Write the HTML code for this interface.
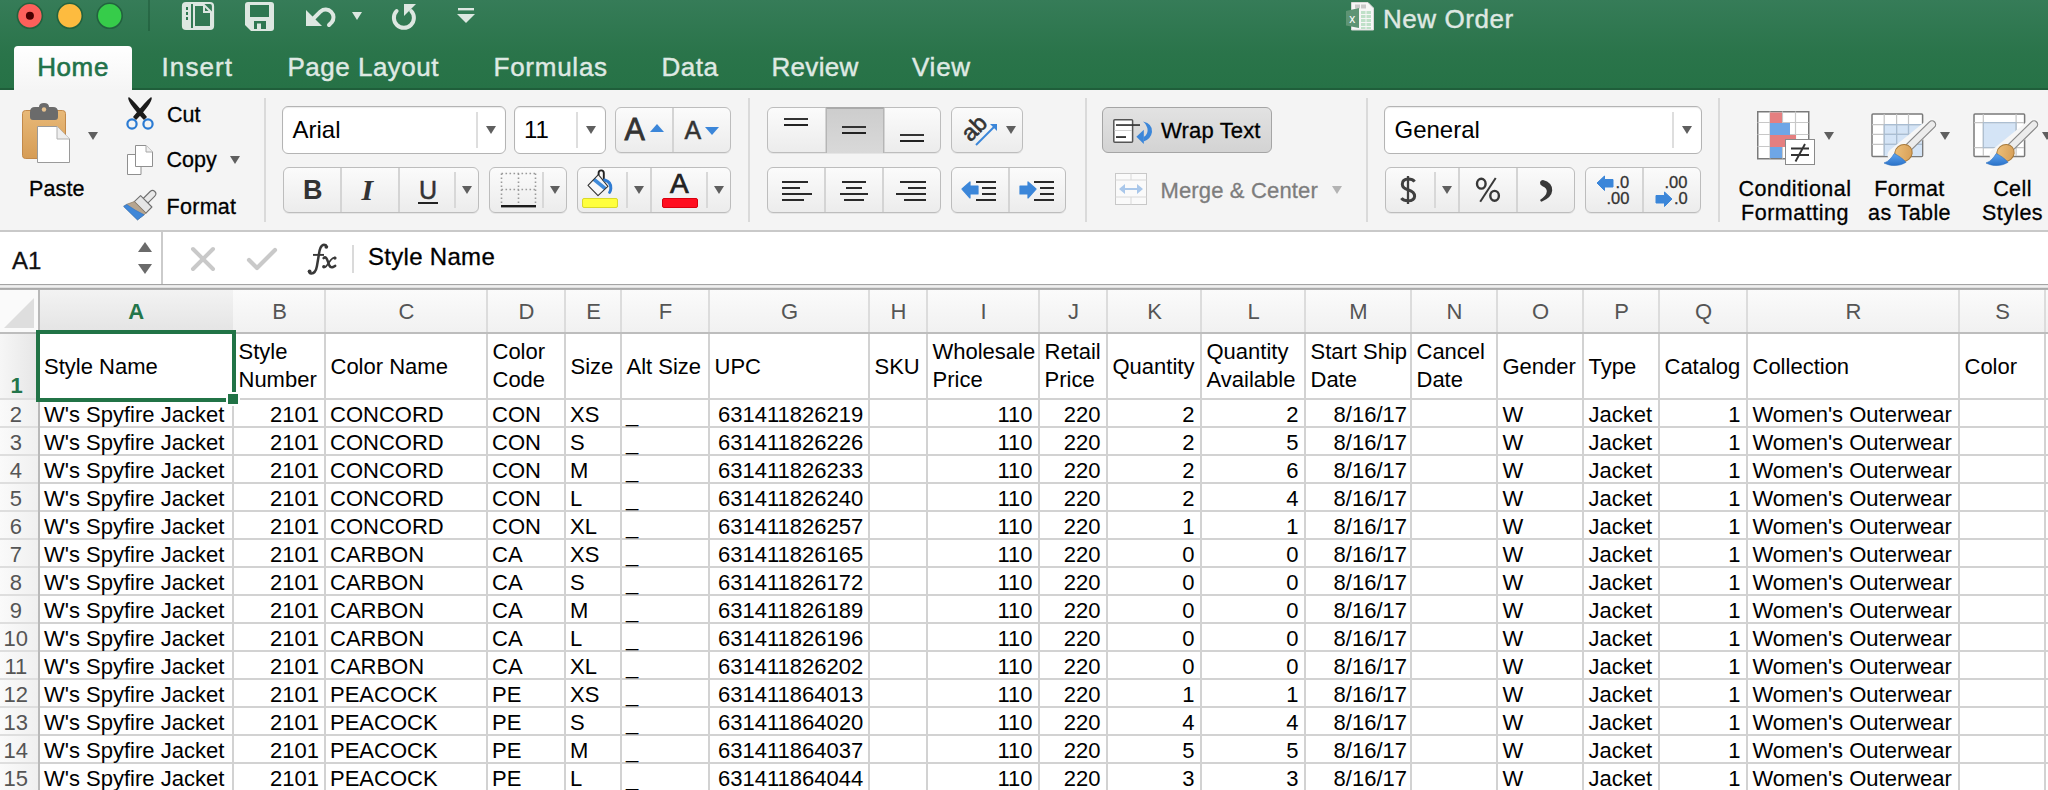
<!DOCTYPE html>
<html><head><meta charset="utf-8"><title>New Order</title>
<style>
html,body{margin:0;padding:0;}
body{width:2048px;height:790px;overflow:hidden;position:relative;background:#fff;font-family:"Liberation Sans", sans-serif;}
.t{position:absolute;white-space:pre;}
svg{overflow:visible;}
</style></head><body>
<div style="position:absolute;left:0px;top:0px;width:2048px;height:89px;background:linear-gradient(#367c58,#2a744a 60%,#267246);"></div>
<div style="position:absolute;left:0px;top:88px;width:2048px;height:2px;background:#1f5e3a;"></div>
<svg style="position:absolute;left:0px;top:0px" width="140" height="32" viewBox="0 0 140 32"><g stroke="#22623f" stroke-width="1.6"><circle cx="29.9" cy="15.8" r="12.5" fill="#fd605b"/><circle cx="69.8" cy="15.8" r="12.5" fill="#fdbb3f"/><circle cx="109.7" cy="15.8" r="12.5" fill="#36cc4a"/></g><circle cx="29.9" cy="15.8" r="4" fill="#4a0002"/></svg>
<div style="position:absolute;left:148px;top:0px;width:2px;height:31px;background:rgba(0,40,20,.22);"></div>
<svg style="position:absolute;left:182px;top:2px" width="32" height="28" viewBox="0 0 32 28"><rect x="1" y="1" width="30" height="26" rx="3" fill="none" stroke="#dde7e1" stroke-width="2.2"/><rect x="1" y="1" width="8" height="26" fill="#dde7e1"/><rect x="4" y="5" width="2" height="3" fill="#2f7751"/><rect x="4" y="10" width="2" height="3" fill="#2f7751"/><rect x="4" y="15" width="2" height="3" fill="#2f7751"/><path d="M12 3 H22 L29 10 V25 H12 Z" fill="none" stroke="#dde7e1" stroke-width="2"/><path d="M22 3 V10 H29" fill="none" stroke="#dde7e1" stroke-width="2"/></svg>
<svg style="position:absolute;left:245px;top:2px" width="30" height="29" viewBox="0 0 30 29"><path d="M3 0 H26 Q29 0 29 3 V26 Q29 29 26 29 H6 L0 23 V3 Q0 0 3 0 Z" fill="#dde7e1"/><rect x="5" y="3" width="19" height="12" fill="#2f7751"/><rect x="9" y="19" width="12" height="8" fill="#2f7751"/><rect x="12" y="21.5" width="4" height="5.5" fill="#dde7e1"/></svg>
<svg style="position:absolute;left:296px;top:0px" width="40" height="32" viewBox="0 0 40 32"><path d="M10 10 V26 H26 Z" fill="#dde7e1"/><path d="M16.5 19.5 L24.6 11.4 A7.8 7.8 0 0 1 35.6 22.4 L33 25" fill="none" stroke="#dde7e1" stroke-width="4" stroke-linecap="round" stroke-linejoin="round"/></svg>
<svg style="position:absolute;left:352px;top:12px" width="10" height="9" viewBox="0 0 10 9"><path d="M0 0 H10 L5 8 Z" fill="#dde7e1"/></svg>
<svg style="position:absolute;left:380px;top:0px" width="40" height="32" viewBox="0 0 40 32"><path d="M16.6 11 A10 10 0 1 0 31.2 11" fill="none" stroke="#dde7e1" stroke-width="4" stroke-linecap="round"/><path d="M24 4 H36 L24 16 Z" fill="#dde7e1"/></svg>
<svg style="position:absolute;left:457px;top:7px" width="18" height="17" viewBox="0 0 18 17"><rect x="1" y="1" width="16" height="2.4" fill="#dde7e1"/><path d="M0 7 H18 L9 16 Z" fill="#dde7e1"/></svg>
<svg style="position:absolute;left:1346px;top:2px" width="28" height="28" viewBox="0 0 28 28"><path d="M5.5 0.5 H22 L27.5 6 V28 H5.5 Z" fill="#f6f6f6" stroke="#d8d8d8" stroke-width="1"/><g fill="#c9c9c9"><rect x="9" y="2.5" width="5" height="4"/><rect x="15" y="2.5" width="5" height="4"/></g><g fill="#bfe0c8"><rect x="15" y="9" width="4.5" height="3"/><rect x="20.5" y="9" width="4.5" height="3"/><rect x="15" y="13" width="4.5" height="3"/><rect x="20.5" y="13" width="4.5" height="3"/><rect x="15" y="17" width="4.5" height="3"/><rect x="20.5" y="17" width="4.5" height="3"/><rect x="15" y="21" width="4.5" height="3"/><rect x="20.5" y="21" width="4.5" height="3"/><rect x="15" y="25" width="4.5" height="2"/><rect x="20.5" y="25" width="4.5" height="2"/></g><path d="M0 9 L13 6 V26 L0 23.5 Z" fill="#5e9474"/><text x="6.3" y="20.5" font-size="12" fill="#fff" text-anchor="middle" font-family="Liberation Sans">x</text></svg>
<div class="t" style="left:1383px;top:6.29px;font-size:26px;line-height:26px;color:#dfe8e2;font-weight:normal;letter-spacing:0.55px;-webkit-text-stroke:0.45px #dfe8e2;">New Order</div>
<div style="position:absolute;left:14px;top:46px;width:118px;height:44px;background:linear-gradient(#ffffff,#f5f5f5);border-radius:4px 4px 0 0;"></div>
<div class="t" style="left:37.2px;top:54.29px;font-size:26px;line-height:26px;color:#22724a;font-weight:normal;letter-spacing:0.6px;-webkit-text-stroke:0.6px #22724a;">Home</div>
<div class="t" style="left:161.5px;top:54.49px;font-size:26px;line-height:26px;color:#dfe9e3;font-weight:normal;letter-spacing:1.1px;-webkit-text-stroke:0.45px #dfe9e3;">Insert</div>
<div class="t" style="left:287.5px;top:54.49px;font-size:26px;line-height:26px;color:#dfe9e3;font-weight:normal;letter-spacing:0.5px;-webkit-text-stroke:0.45px #dfe9e3;">Page Layout</div>
<div class="t" style="left:493.5px;top:54.49px;font-size:26px;line-height:26px;color:#dfe9e3;font-weight:normal;letter-spacing:0.75px;-webkit-text-stroke:0.45px #dfe9e3;">Formulas</div>
<div class="t" style="left:661.5px;top:54.49px;font-size:26px;line-height:26px;color:#dfe9e3;font-weight:normal;letter-spacing:0.5px;-webkit-text-stroke:0.45px #dfe9e3;">Data</div>
<div class="t" style="left:771.5px;top:54.49px;font-size:26px;line-height:26px;color:#dfe9e3;font-weight:normal;letter-spacing:0.3px;-webkit-text-stroke:0.45px #dfe9e3;">Review</div>
<div class="t" style="left:912px;top:54.49px;font-size:26px;line-height:26px;color:#dfe9e3;font-weight:normal;letter-spacing:0.75px;-webkit-text-stroke:0.45px #dfe9e3;">View</div>
<div style="position:absolute;left:0px;top:90px;width:2048px;height:140px;background:#f4f4f4;"></div>
<div style="position:absolute;left:0px;top:230px;width:2048px;height:2px;background:#c9c9c9;"></div>
<svg style="position:absolute;left:20px;top:102px" width="52" height="62" viewBox="0 0 52 62"><defs><linearGradient id="cb" x1="0" y1="0" x2="0" y2="1"><stop offset="0" stop-color="#e8b978"/><stop offset="1" stop-color="#d69c55"/></linearGradient></defs><rect x="2.5" y="8.5" width="43" height="48" rx="3" fill="url(#cb)" stroke="#c2894a" stroke-width="1"/><path d="M10 10 Q10 5 15 5 H19 Q19 1 24 1 Q29 1 29 5 H33 Q38 5 38 10 V15 Q38 18 35 18 H13 Q10 18 10 15 Z" fill="#6b6b6b"/><circle cx="24" cy="7.5" r="2.2" fill="#e8c390"/><path d="M17.5 24.5 H37 L49.5 37 V60.5 H17.5 Z" fill="#fff" stroke="#9a9a9a" stroke-width="1"/><path d="M37 24.5 V37 H49.5" fill="#eeeeee" stroke="#b0b0b0" stroke-width="1"/></svg>
<svg style="position:absolute;left:88px;top:132px" width="10" height="8" viewBox="0 0 10 8"><path d="M0 0 H10 L5.0 8 Z" fill="#5f5f5f"/></svg>
<div class="t" style="left:29px;top:178.80px;font-size:21.5px;line-height:21.5px;color:#000;font-weight:normal;letter-spacing:0.15px;-webkit-text-stroke:0.3px #000;">Paste</div>
<svg style="position:absolute;left:124px;top:97px" width="32" height="34" viewBox="0 0 32 34"><path d="M5 1 Q5 6 20 22 L22 20 Q10 5 5 1 Z" fill="#1b1b1b" stroke="#1b1b1b" stroke-width="1.6" stroke-linejoin="round"/><path d="M27 1 Q27 6 12 22 L10 20 Q22 5 27 1 Z" fill="#1b1b1b" stroke="#1b1b1b" stroke-width="1.6" stroke-linejoin="round"/><circle cx="8" cy="27" r="4.6" fill="none" stroke="#2b7bd3" stroke-width="2.2"/><circle cx="24" cy="27" r="4.6" fill="none" stroke="#2b7bd3" stroke-width="2.2"/></svg>
<div class="t" style="left:167px;top:104.80px;font-size:21.5px;line-height:21.5px;color:#000;font-weight:normal;-webkit-text-stroke:0.3px #000;">Cut</div>
<svg style="position:absolute;left:126px;top:144px" width="28" height="32" viewBox="0 0 28 32"><path d="M1.5 10.5 H15 V30.5 H1.5 Z" fill="#fff" stroke="#8f8f8f" stroke-width="1"/><path d="M9.5 1.5 H20 L26.5 8 V22.5 H9.5 Z" fill="#fff" stroke="#8f8f8f" stroke-width="1"/><path d="M20 1.5 V8 H26.5" fill="#eee" stroke="#a8a8a8" stroke-width="1"/></svg>
<div class="t" style="left:166.5px;top:149.80px;font-size:21.5px;line-height:21.5px;color:#000;font-weight:normal;-webkit-text-stroke:0.3px #000;">Copy</div>
<svg style="position:absolute;left:230px;top:156px" width="10" height="8" viewBox="0 0 10 8"><path d="M0 0 H10 L5.0 8 Z" fill="#5f5f5f"/></svg>
<svg style="position:absolute;left:118px;top:186px" width="44" height="38" viewBox="0 0 44 38"><path d="M34.5 7.8 L27.5 14.8" stroke="#707070" stroke-width="7.6" stroke-linecap="round"/><path d="M34.5 7.8 L27.5 14.8" stroke="#e9e9e9" stroke-width="5.4" stroke-linecap="round"/><path d="M16.3 15.6 L22.6 9.6 L33.9 21 L27.9 27.2 Z" fill="#e6e6e6" stroke="#707070" stroke-width="1.1" stroke-linejoin="round"/><path d="M16.3 15.6 L8.7 18.3 L5.8 20.3 L19.5 33.8 L26 28.8 L27.9 27.2 Z" fill="#b6a590" stroke="#8c7b66" stroke-width=".7"/><path d="M5.6 20.4 L8.8 18.6 Q17 24.5 26.2 28.8 L19.5 33.9 Z" fill="#3f87d8" stroke="#2f74c4" stroke-width=".6"/></svg>
<div class="t" style="left:166.5px;top:196.80px;font-size:21.5px;line-height:21.5px;color:#000;font-weight:normal;letter-spacing:0.3px;-webkit-text-stroke:0.3px #000;">Format</div>
<div style="position:absolute;left:264px;top:98px;width:2px;height:124px;background:#dadada;"></div>
<div style="position:absolute;left:282px;top:106px;width:224px;height:48px;box-sizing:border-box;border:1.5px solid #b4b4b4;border-radius:6px;background:#fff;box-shadow:inset 0 1px 1px rgba(0,0,0,.08);"></div>
<div style="position:absolute;left:476px;top:112px;width:2px;height:36px;background:#dedede;"></div>
<svg style="position:absolute;left:486px;top:126px" width="10" height="8" viewBox="0 0 10 8"><path d="M0 0 H10 L5.0 8 Z" fill="#5f5f5f"/></svg>
<div class="t" style="left:292.5px;top:117.68px;font-size:24px;line-height:24px;color:#000;font-weight:normal; ">Arial</div>
<div style="position:absolute;left:514px;top:106px;width:92px;height:48px;box-sizing:border-box;border:1.5px solid #b4b4b4;border-radius:6px;background:#fff;box-shadow:inset 0 1px 1px rgba(0,0,0,.08);"></div>
<div style="position:absolute;left:576px;top:112px;width:2px;height:36px;background:#dedede;"></div>
<svg style="position:absolute;left:586px;top:126px" width="10" height="8" viewBox="0 0 10 8"><path d="M0 0 H10 L5.0 8 Z" fill="#5f5f5f"/></svg>
<div class="t" style="left:524px;top:117.68px;font-size:24px;line-height:24px;color:#000;font-weight:normal; ">11</div>
<div style="position:absolute;left:615px;top:107px;width:116px;height:46px;box-sizing:border-box;border:1px solid #bdbdbd;border-radius:6px;background:linear-gradient(#fbfbfb,#ececec);box-shadow:0 1px 0 rgba(0,0,0,.06);"></div>
<div style="position:absolute;left:672px;top:108px;width:2px;height:44px;background:#d4d4d4;"></div>
<div class="t" style="left:624.5px;top:114.08px;font-size:30.5px;line-height:30.5px;color:#333;font-weight:normal;-webkit-text-stroke:0.8px #333;">A</div>
<svg style="position:absolute;left:650px;top:124px" width="14" height="8" viewBox="0 0 14 8"><path d="M0 8 H14 L7.0 0 Z" fill="#3b86d9"/></svg>
<div class="t" style="left:684.5px;top:118.24px;font-size:25px;line-height:25px;color:#333;font-weight:normal;-webkit-text-stroke:0.5px #333;">A</div>
<svg style="position:absolute;left:705px;top:127px" width="14" height="8" viewBox="0 0 14 8"><path d="M0 0 H14 L7.0 8 Z" fill="#3b86d9"/></svg>
<div style="position:absolute;left:283px;top:167px;width:196px;height:46px;box-sizing:border-box;border:1px solid #bdbdbd;border-radius:6px;background:linear-gradient(#fbfbfb,#ececec);box-shadow:0 1px 0 rgba(0,0,0,.06);"></div>
<div style="position:absolute;left:340px;top:168px;width:2px;height:44px;background:#d4d4d4;"></div>
<div style="position:absolute;left:398px;top:168px;width:2px;height:44px;background:#d4d4d4;"></div>
<div style="position:absolute;left:454px;top:172px;width:2px;height:36px;background:#d8d8d8;"></div>
<div class="t" style="left:303px;top:177.14px;font-size:27px;line-height:27px;color:#333;font-weight:bold;">B</div>
<div class="t" style="left:361.5px;top:175.10px;font-size:30px;line-height:30px;color:#333;font-weight:bold;font-family:'Liberation Serif', serif;font-style:italic;">I</div>
<div class="t" style="left:419px;top:177.84px;font-size:25px;line-height:25px;color:#333;font-weight:normal;-webkit-text-stroke:0.5px #333;">U</div>
<div style="position:absolute;left:418px;top:202px;width:20px;height:2px;background:#222;"></div>
<svg style="position:absolute;left:462px;top:186px" width="10" height="8" viewBox="0 0 10 8"><path d="M0 0 H10 L5.0 8 Z" fill="#5f5f5f"/></svg>
<div style="position:absolute;left:489px;top:167px;width:78px;height:46px;box-sizing:border-box;border:1px solid #bdbdbd;border-radius:6px;background:linear-gradient(#fbfbfb,#ececec);box-shadow:0 1px 0 rgba(0,0,0,.06);"></div>
<div style="position:absolute;left:542px;top:172px;width:2px;height:36px;background:#d8d8d8;"></div>
<svg style="position:absolute;left:500px;top:172px" width="37" height="37" viewBox="0 0 37 37"><g fill="none" stroke="#9a9a9a" stroke-width="1.6" stroke-dasharray="1.6 2.4"><path d="M1.5 1.5 H35.5 M1.5 1.5 V33 M35.5 1.5 V33 M18.5 1.5 V33 M1.5 17.5 H35.5"/></g><rect x="1" y="33" width="35" height="2.4" fill="#1b1b1b"/></svg>
<svg style="position:absolute;left:550px;top:186px" width="10" height="8" viewBox="0 0 10 8"><path d="M0 0 H10 L5.0 8 Z" fill="#5f5f5f"/></svg>
<div style="position:absolute;left:577px;top:167px;width:154px;height:46px;box-sizing:border-box;border:1px solid #bdbdbd;border-radius:6px;background:linear-gradient(#fbfbfb,#ececec);box-shadow:0 1px 0 rgba(0,0,0,.06);"></div>
<div style="position:absolute;left:650px;top:168px;width:2px;height:44px;background:#d4d4d4;"></div>
<div style="position:absolute;left:626px;top:172px;width:2px;height:36px;background:#d8d8d8;"></div>
<div style="position:absolute;left:706px;top:172px;width:2px;height:36px;background:#d8d8d8;"></div>
<svg style="position:absolute;left:582px;top:166px" width="34" height="34" viewBox="0 0 34 34"><defs><clipPath id="bk"><path d="M6 19.4 L16.4 8.6 L25.9 20.3 L16 29.7 Z"/></clipPath></defs><path d="M6 19.4 L16.4 8.6 L25.9 20.3 L16 29.7 Z" fill="#f8f8f8"/><path d="M11 12.6 L24.5 23.6" stroke="#3f8ad9" stroke-width="3.8" clip-path="url(#bk)"/><path d="M6 19.4 L16.4 8.6 L25.9 20.3 L16 29.7 Z" fill="none" stroke="#333" stroke-width="1.1" stroke-linejoin="round"/><path d="M16.6 9 V7 A2.6 2.6 0 0 1 21.8 7 V15" fill="none" stroke="#222" stroke-width="1.9"/><path d="M22.6 14 Q29.2 15.8 28.8 22.5 Q28.6 25.2 27.6 26.4" fill="none" stroke="#2f7cd3" stroke-width="3" stroke-linecap="round"/></svg>
<div style="position:absolute;left:582px;top:198px;width:36px;height:10px;background:#ffff3c;border:1px solid #d9d92a;box-sizing:border-box;border-radius:2px;"></div>
<svg style="position:absolute;left:634px;top:186px" width="10" height="8" viewBox="0 0 10 8"><path d="M0 0 H10 L5.0 8 Z" fill="#5f5f5f"/></svg>
<div class="t" style="left:670px;top:170.30px;font-size:28px;line-height:28px;color:#222;font-weight:normal;-webkit-text-stroke:0.7px #222;">A</div>
<div style="position:absolute;left:662px;top:198px;width:36px;height:10px;background:#ff0d1f;border:1px solid #d8000e;box-sizing:border-box;border-radius:2px;"></div>
<svg style="position:absolute;left:714px;top:186px" width="10" height="8" viewBox="0 0 10 8"><path d="M0 0 H10 L5.0 8 Z" fill="#5f5f5f"/></svg>
<div style="position:absolute;left:748px;top:98px;width:2px;height:124px;background:#dadada;"></div>
<div style="position:absolute;left:767px;top:107px;width:174px;height:46px;box-sizing:border-box;border:1px solid #bdbdbd;border-radius:6px;background:linear-gradient(#fbfbfb,#ececec);box-shadow:0 1px 0 rgba(0,0,0,.06);"></div>
<div style="position:absolute;left:825px;top:108px;width:2px;height:44px;background:#d4d4d4;"></div>
<div style="position:absolute;left:883px;top:108px;width:2px;height:44px;background:#d4d4d4;"></div>
<div style="position:absolute;left:826px;top:107px;width:58px;height:46px;background:linear-gradient(#cdcdcd,#d9d9d9);border-top:2px solid #aaaaaa;border-left:1px solid #b5b5b5;border-right:1px solid #b5b5b5;box-sizing:border-box;"></div>
<div style="position:absolute;left:784px;top:118px;width:24px;height:2px;background:#333;"></div>
<div style="position:absolute;left:784px;top:124px;width:24px;height:2px;background:#222;"></div>
<div style="position:absolute;left:842px;top:126px;width:24px;height:2px;background:#333;"></div>
<div style="position:absolute;left:842px;top:132px;width:24px;height:2px;background:#222;"></div>
<div style="position:absolute;left:900px;top:134px;width:24px;height:2px;background:#333;"></div>
<div style="position:absolute;left:900px;top:140px;width:24px;height:2px;background:#222;"></div>
<div style="position:absolute;left:951px;top:107px;width:72px;height:46px;box-sizing:border-box;border:1px solid #bdbdbd;border-radius:6px;background:linear-gradient(#fbfbfb,#ececec);box-shadow:0 1px 0 rgba(0,0,0,.06);"></div>
<svg style="position:absolute;left:960px;top:112px" width="42" height="36" viewBox="0 0 42 36"><text x="0" y="0" font-family="Liberation Sans" font-size="23" fill="#333" stroke="#333" stroke-width="0.6" transform="translate(10.5 30.5) rotate(-45)">ab</text><path d="M16 33 L35 14" stroke="#3b86d9" stroke-width="2"/><path d="M30 12 L37 12 L37 19 Z" fill="#3b86d9"/></svg>
<svg style="position:absolute;left:1006px;top:126px" width="10" height="8" viewBox="0 0 10 8"><path d="M0 0 H10 L5.0 8 Z" fill="#5f5f5f"/></svg>
<div style="position:absolute;left:767px;top:167px;width:174px;height:46px;box-sizing:border-box;border:1px solid #bdbdbd;border-radius:6px;background:linear-gradient(#fbfbfb,#ececec);box-shadow:0 1px 0 rgba(0,0,0,.06);"></div>
<div style="position:absolute;left:824px;top:168px;width:2px;height:44px;background:#d4d4d4;"></div>
<div style="position:absolute;left:882px;top:168px;width:2px;height:44px;background:#d4d4d4;"></div>
<div style="position:absolute;left:782px;top:181px;width:26px;height:2px;background:#2a2a2a;"></div>
<div style="position:absolute;left:782px;top:187px;width:18px;height:2px;background:#2a2a2a;"></div>
<div style="position:absolute;left:782px;top:193px;width:30px;height:2px;background:#2a2a2a;"></div>
<div style="position:absolute;left:782px;top:199px;width:22px;height:2px;background:#2a2a2a;"></div>
<div style="position:absolute;left:842px;top:181px;width:24px;height:2px;background:#2a2a2a;"></div>
<div style="position:absolute;left:846px;top:187px;width:16px;height:2px;background:#2a2a2a;"></div>
<div style="position:absolute;left:840px;top:193px;width:28px;height:2px;background:#2a2a2a;"></div>
<div style="position:absolute;left:844px;top:199px;width:20px;height:2px;background:#2a2a2a;"></div>
<div style="position:absolute;left:900px;top:181px;width:26px;height:2px;background:#2a2a2a;"></div>
<div style="position:absolute;left:908px;top:187px;width:18px;height:2px;background:#2a2a2a;"></div>
<div style="position:absolute;left:896px;top:193px;width:30px;height:2px;background:#2a2a2a;"></div>
<div style="position:absolute;left:904px;top:199px;width:22px;height:2px;background:#2a2a2a;"></div>
<div style="position:absolute;left:951px;top:167px;width:115px;height:46px;box-sizing:border-box;border:1px solid #bdbdbd;border-radius:6px;background:linear-gradient(#fbfbfb,#ececec);box-shadow:0 1px 0 rgba(0,0,0,.06);"></div>
<div style="position:absolute;left:1008px;top:168px;width:2px;height:44px;background:#d4d4d4;"></div>
<svg style="position:absolute;left:962px;top:181px" width="36" height="20" viewBox="0 0 36 20"><path d="M0 8 L8 1 V5 H16 V13 H8 V17 Z" fill="#3b86d9" stroke="#3b86d9" stroke-linejoin="round" stroke-width="1.2"/><rect x="14" y="0" width="20" height="2" fill="#2a2a2a"/><rect x="20" y="6" width="14" height="2" fill="#2a2a2a"/><rect x="20" y="12" width="14" height="2" fill="#2a2a2a"/><rect x="14" y="18" width="20" height="2" fill="#2a2a2a"/></svg>
<svg style="position:absolute;left:1020px;top:181px" width="36" height="20" viewBox="0 0 36 20"><path d="M16 8 L8 1 V5 H0 V13 H8 V17 Z" fill="#3b86d9" stroke="#3b86d9" stroke-linejoin="round" stroke-width="1.2"/><rect x="14" y="0" width="20" height="2" fill="#2a2a2a"/><rect x="20" y="6" width="14" height="2" fill="#2a2a2a"/><rect x="20" y="12" width="14" height="2" fill="#2a2a2a"/><rect x="14" y="18" width="20" height="2" fill="#2a2a2a"/></svg>
<div style="position:absolute;left:1085px;top:98px;width:2px;height:124px;background:#dadada;"></div>
<div style="position:absolute;left:1102px;top:107px;width:170px;height:46px;box-sizing:border-box;border:1.5px solid #a5a5a5;border-radius:6px;background:linear-gradient(#e2e2e2,#d3d3d3);"></div>
<svg style="position:absolute;left:1112px;top:118px" width="42" height="32" viewBox="0 0 42 32"><rect x="1.8" y="1.7" width="18.8" height="22.6" rx="1" fill="#fff" stroke="#555" stroke-width="1.5"/><rect x="2.5" y="12" width="17.5" height="1" fill="#d0d0d0"/><rect x="4" y="6.2" width="24" height="1.7" fill="#333"/><rect x="4" y="18.2" width="10" height="1.7" fill="#222"/><path d="M31 3.5 Q41 6 40 14 Q39 21 31.6 23.5 L31.6 19 Q35.8 16.5 35.6 12 Q35.2 7 31 3.5 Z" fill="#3b86d9"/><path d="M24.4 18.7 L31.8 11.8 V26 Z" fill="#3b86d9"/></svg>
<div class="t" style="left:1161px;top:120.18px;font-size:22px;line-height:22px;color:#000;font-weight:normal;letter-spacing:0.15px;-webkit-text-stroke:0.3px #000;">Wrap Text</div>
<svg style="position:absolute;left:1115px;top:173px" width="32" height="32" viewBox="0 0 32 32"><rect x="0.5" y="0.5" width="31" height="31" fill="#fafafa" stroke="#c8c8c8"/><path d="M0.5 7 H31.5 M0.5 24 H31.5 M16 0.5 V7 M16 24 V31.5" stroke="#d8d8d8" stroke-width="1"/><path d="M6 16 H26" stroke="#a9c7ea" stroke-width="2"/><path d="M4 16 L10 11 V21 Z M28 16 L22 11 V21 Z" fill="#a9c7ea"/></svg>
<div class="t" style="left:1160.5px;top:179.68px;font-size:22px;line-height:22px;color:#7d7d7d;font-weight:normal;letter-spacing:0.15px;-webkit-text-stroke:0.3px #7d7d7d;">Merge &amp; Center</div>
<svg style="position:absolute;left:1332px;top:186px" width="10" height="8" viewBox="0 0 10 8"><path d="M0 0 H10 L5.0 8 Z" fill="#b3b3b3"/></svg>
<div style="position:absolute;left:1366px;top:98px;width:2px;height:124px;background:#dadada;"></div>
<div style="position:absolute;left:1384px;top:106px;width:318px;height:48px;box-sizing:border-box;border:1.5px solid #b4b4b4;border-radius:6px;background:#fff;box-shadow:inset 0 1px 1px rgba(0,0,0,.08);"></div>
<div style="position:absolute;left:1672px;top:112px;width:2px;height:36px;background:#dedede;"></div>
<svg style="position:absolute;left:1682px;top:126px" width="10" height="8" viewBox="0 0 10 8"><path d="M0 0 H10 L5.0 8 Z" fill="#5f5f5f"/></svg>
<div class="t" style="left:1394.5px;top:117.68px;font-size:24px;line-height:24px;color:#000;font-weight:normal; ">General</div>
<div style="position:absolute;left:1385px;top:167px;width:190px;height:46px;box-sizing:border-box;border:1px solid #bdbdbd;border-radius:6px;background:linear-gradient(#fbfbfb,#ececec);box-shadow:0 1px 0 rgba(0,0,0,.06);"></div>
<div style="position:absolute;left:1458px;top:168px;width:2px;height:44px;background:#d4d4d4;"></div>
<div style="position:absolute;left:1516px;top:168px;width:2px;height:44px;background:#d4d4d4;"></div>
<div style="position:absolute;left:1434px;top:172px;width:2px;height:36px;background:#d8d8d8;"></div>
<svg style="position:absolute;left:1396px;top:174px" width="24" height="32" viewBox="0 0 24 32"><path d="M12 2 V30" stroke="#404040" stroke-width="2.3"/><path d="M18.6 7.6 Q16.8 5.2 12.3 5.1 Q6.4 5.2 6.3 10.2 Q6.4 14 12 15.7 Q18.7 17.7 18.6 22.3 Q18.3 26.7 12 26.8 Q7.4 26.8 5.4 24.1" fill="none" stroke="#404040" stroke-width="3"/></svg>
<svg style="position:absolute;left:1442px;top:186px" width="10" height="8" viewBox="0 0 10 8"><path d="M0 0 H10 L5.0 8 Z" fill="#5f5f5f"/></svg>
<svg style="position:absolute;left:1470px;top:175px" width="32" height="30" viewBox="0 0 32 30"><ellipse cx="11.3" cy="8.7" rx="4.3" ry="4.9" fill="none" stroke="#383838" stroke-width="2.4"/><ellipse cx="24.6" cy="20.8" rx="4.3" ry="4.9" fill="none" stroke="#383838" stroke-width="2.4"/><path d="M25.7 3 L10.2 26.8" stroke="#383838" stroke-width="2"/></svg>
<svg style="position:absolute;left:1536px;top:178px" width="20" height="28" viewBox="0 0 20 28"><path d="M7 2 Q16.5 4.5 16.2 12.5 Q15.8 19.5 5.5 23.8 Q4 23.5 4.2 21.8 Q10.5 17.5 10.8 13.5 Q11 10 6.5 8.2 Q3.8 7 4 4.8 Q4.5 2 7 2 Z" fill="#383838"/></svg>
<div style="position:absolute;left:1585px;top:167px;width:116px;height:46px;box-sizing:border-box;border:1px solid #bdbdbd;border-radius:6px;background:linear-gradient(#fbfbfb,#ececec);box-shadow:0 1px 0 rgba(0,0,0,.06);"></div>
<div style="position:absolute;left:1642px;top:168px;width:2px;height:44px;background:#d4d4d4;"></div>
<svg style="position:absolute;left:1597px;top:176px" width="18" height="15" viewBox="0 0 18 15"><path d="M0 7 L7.5 0 V3.5 H16 V11 H7.5 V14.5 Z" fill="#3b86d9" stroke="#3b86d9" stroke-width="1" stroke-linejoin="round"/></svg>
<div class="t" style="left:1615.5px;top:173.83px;font-size:16.5px;line-height:16.5px;color:#333;font-weight:normal;-webkit-text-stroke:0.3px #333;">.0</div>
<div class="t" style="left:1606.5px;top:189.83px;font-size:16.5px;line-height:16.5px;color:#333;font-weight:normal;-webkit-text-stroke:0.3px #333;">.00</div>
<div class="t" style="left:1664.5px;top:173.83px;font-size:16.5px;line-height:16.5px;color:#333;font-weight:normal;-webkit-text-stroke:0.3px #333;">.00</div>
<svg style="position:absolute;left:1656px;top:192px" width="18" height="15" viewBox="0 0 18 15"><path d="M16 7 L8.5 0 V3.5 H0 V11 H8.5 V14.5 Z" fill="#3b86d9" stroke="#3b86d9" stroke-width="1" stroke-linejoin="round"/></svg>
<div class="t" style="left:1674px;top:189.83px;font-size:16.5px;line-height:16.5px;color:#333;font-weight:normal;-webkit-text-stroke:0.3px #333;">.0</div>
<div style="position:absolute;left:1718px;top:98px;width:2px;height:124px;background:#dadada;"></div>
<svg style="position:absolute;left:1757px;top:111px" width="60" height="56" viewBox="0 0 60 56"><rect x="0.75" y="0.75" width="51" height="47" fill="#fff" stroke="#7a7a7a" stroke-width="1.5"/><path d="M13 0.5 V47.5 M25.5 0.5 V47.5 M38.5 0.5 V47.5 M0.5 11.5 H51.5 M0.5 23.5 H51.5 M0.5 35.5 H51.5" stroke="#c8c8c8" stroke-width="1.2" fill="none"/><rect x="13" y="1.5" width="12" height="10.5" fill="#e57f80"/><rect x="13" y="12" width="20" height="12" fill="#6ea6e6"/><rect x="13" y="24" width="26" height="12" fill="#e57f80"/><rect x="13" y="36" width="12" height="11" fill="#6ea6e6"/><rect x="28.5" y="28.5" width="29" height="25" fill="#fff" stroke="#8a8a8a"/><path d="M34 37.5 H52 M34 44 H52 M38.5 50.5 L48 33" stroke="#333" stroke-width="1.9"/></svg>
<svg style="position:absolute;left:1824px;top:132px" width="10" height="8" viewBox="0 0 10 8"><path d="M0 0 H10 L5.0 8 Z" fill="#5f5f5f"/></svg>
<svg style="position:absolute;left:1866px;top:108px" width="70" height="62" viewBox="0 0 70 62"><rect x="6" y="6" width="50.6" height="42.6" rx="1" fill="#fff" stroke="#7a7a7a" stroke-width="1.5"/><rect x="18.2" y="16.6" width="37.8" height="31.4" fill="#d4e4f6"/><path d="M18.2 6 V48 M30.6 6 V48 M42.5 6 V48 M6 16.6 H56 M6 26.3 H56 M6 36.4 H56" stroke="#c4c4c4" stroke-width="1.2" fill="none"/><path d="M18.2 16.6 V48 M30.6 16.6 V48 M42.5 16.6 V48 M18.2 16.6 H56 M18.2 26.3 H56 M18.2 36.4 H56" stroke="#a9bdd2" stroke-width="1.2" fill="none"/><path d="M28 47 L65 17" stroke="#f6f6f6" stroke-width="13" stroke-linecap="round"/><defs><linearGradient id="hd" x1="0" y1="0" x2="1" y2="1"><stop offset="0" stop-color="#f0c47e"/><stop offset="1" stop-color="#d49a52"/></linearGradient><linearGradient id="bl" x1="0" y1="0" x2="0" y2="1"><stop offset="0" stop-color="#5fa4f0"/><stop offset="1" stop-color="#2a72c8"/></linearGradient></defs><path d="M43 39 L66 16.5" stroke="#8a8a8a" stroke-width="8.5" stroke-linecap="round"/><path d="M43 39 L66 16.5" stroke="#ececec" stroke-width="6" stroke-linecap="round"/><ellipse cx="37.5" cy="45" rx="9" ry="8.3" fill="url(#hd)" stroke="#a87a3a" stroke-width="1" transform="rotate(-40 37.5 45)"/><path d="M18 55 C23 53.5 26 49 28.3 45.5 C32 47.5 37 50.5 40 54.3 C33 58.5 25 58.5 18 55 Z" fill="url(#bl)" stroke="#2a6fc0" stroke-width=".6"/></svg>
<svg style="position:absolute;left:1940px;top:132px" width="10" height="8" viewBox="0 0 10 8"><path d="M0 0 H10 L5.0 8 Z" fill="#5f5f5f"/></svg>
<svg style="position:absolute;left:1968px;top:108px" width="70" height="62" viewBox="0 0 70 62"><rect x="6" y="6" width="50.6" height="42.6" rx="1" fill="#fff" stroke="#7a7a7a" stroke-width="1.5"/><rect x="15.3" y="14.6" width="32.8" height="25.1" fill="#d4e4f6"/><path d="M15.3 6 V48 M48.1 6 V48 M6 14.6 H56 M6 39.7 H56" stroke="#c4c4c4" stroke-width="1.2" fill="none"/><rect x="15.3" y="14.6" width="32.8" height="25.1" fill="none" stroke="#a9bdd2" stroke-width="1"/><path d="M28 47 L65 17" stroke="#f6f6f6" stroke-width="13" stroke-linecap="round"/><defs><linearGradient id="hd" x1="0" y1="0" x2="1" y2="1"><stop offset="0" stop-color="#f0c47e"/><stop offset="1" stop-color="#d49a52"/></linearGradient><linearGradient id="bl" x1="0" y1="0" x2="0" y2="1"><stop offset="0" stop-color="#5fa4f0"/><stop offset="1" stop-color="#2a72c8"/></linearGradient></defs><path d="M43 39 L66 16.5" stroke="#8a8a8a" stroke-width="8.5" stroke-linecap="round"/><path d="M43 39 L66 16.5" stroke="#ececec" stroke-width="6" stroke-linecap="round"/><ellipse cx="37.5" cy="45" rx="9" ry="8.3" fill="url(#hd)" stroke="#a87a3a" stroke-width="1" transform="rotate(-40 37.5 45)"/><path d="M18 55 C23 53.5 26 49 28.3 45.5 C32 47.5 37 50.5 40 54.3 C33 58.5 25 58.5 18 55 Z" fill="url(#bl)" stroke="#2a6fc0" stroke-width=".6"/></svg>
<svg style="position:absolute;left:2042px;top:132px" width="10" height="8" viewBox="0 0 10 8"><path d="M0 0 H10 L5.0 8 Z" fill="#5f5f5f"/></svg>
<div class="t" style="left:1725.0px;width:140px;text-align:center;top:178.80px;font-size:21.5px;line-height:21.5px;color:#000;font-weight:normal;letter-spacing:0.5px;-webkit-text-stroke:0.3px #000;">Conditional</div>
<div class="t" style="left:1725.0px;width:140px;text-align:center;top:202.80px;font-size:21.5px;line-height:21.5px;color:#000;font-weight:normal;letter-spacing:0.5px;-webkit-text-stroke:0.3px #000;">Formatting</div>
<div class="t" style="left:1849.5px;width:120px;text-align:center;top:178.80px;font-size:21.5px;line-height:21.5px;color:#000;font-weight:normal;letter-spacing:0.4px;-webkit-text-stroke:0.3px #000;">Format</div>
<div class="t" style="left:1849.5px;width:120px;text-align:center;top:202.80px;font-size:21.5px;line-height:21.5px;color:#000;font-weight:normal;letter-spacing:0.4px;-webkit-text-stroke:0.3px #000;">as Table</div>
<div class="t" style="left:1962.5px;width:100px;text-align:center;top:178.80px;font-size:21.5px;line-height:21.5px;color:#000;font-weight:normal;letter-spacing:0.4px;-webkit-text-stroke:0.3px #000;">Cell</div>
<div class="t" style="left:1962.5px;width:100px;text-align:center;top:202.80px;font-size:21.5px;line-height:21.5px;color:#000;font-weight:normal;letter-spacing:0.4px;-webkit-text-stroke:0.3px #000;">Styles</div>
<div style="position:absolute;left:0px;top:232px;width:2048px;height:52px;background:#fff;"></div>
<div style="position:absolute;left:161px;top:232px;width:2px;height:52px;background:#cbcbcb;"></div>
<div class="t" style="left:12px;top:248.98px;font-size:24px;line-height:24px;color:#111;font-weight:normal;-webkit-text-stroke:0.3px #111;">A1</div>
<svg style="position:absolute;left:138px;top:242px" width="14" height="10" viewBox="0 0 14 10"><path d="M0 10 H14 L7.0 0 Z" fill="#6a6a6a"/></svg>
<svg style="position:absolute;left:138px;top:264px" width="14" height="10" viewBox="0 0 14 10"><path d="M0 0 H14 L7.0 10 Z" fill="#6a6a6a"/></svg>
<svg style="position:absolute;left:190px;top:246px" width="26" height="26" viewBox="0 0 26 26"><path d="M3 3 L23 23 M23 3 L3 23" stroke="#c9c9c9" stroke-width="4" stroke-linecap="round"/></svg>
<svg style="position:absolute;left:246px;top:246px" width="32" height="26" viewBox="0 0 32 26"><path d="M3 14 L11 22 L29 4" fill="none" stroke="#c9c9c9" stroke-width="4.2" stroke-linecap="round" stroke-linejoin="round"/></svg>
<svg style="position:absolute;left:306px;top:242px" width="34" height="34" viewBox="0 0 34 34"><path d="M19.8 3.2 Q16.5 1.8 14.6 5.6 Q13.4 8.2 12.9 12.5 L10.9 24.3 Q9.7 31.2 5.3 31.6 Q3.4 31.7 3.3 29.6" fill="none" stroke="#383838" stroke-width="2.5" stroke-linecap="round"/><circle cx="20.3" cy="4.8" r="1.9" fill="#383838"/><circle cx="3.6" cy="29.3" r="1.9" fill="#383838"/><path d="M7 12.9 H18" stroke="#383838" stroke-width="1.9"/><path d="M17.6 16.2 Q18.8 14.9 20 15.7 Q21 16.6 22.2 20.4 L23.4 23.6 Q24.6 26 27 25 L29.2 23.9" fill="none" stroke="#383838" stroke-width="2.5" stroke-linecap="round"/><path d="M29.2 15.6 Q27 15.1 24.8 18 L20.1 24.4 Q19 25.6 17.8 25" fill="none" stroke="#383838" stroke-width="1.7" stroke-linecap="round"/><circle cx="28.9" cy="16.1" r="1.7" fill="#383838"/><circle cx="17.9" cy="24.7" r="1.8" fill="#383838"/></svg>
<div style="position:absolute;left:352px;top:245px;width:2px;height:28px;background:#dadada;"></div>
<div class="t" style="left:368px;top:244.98px;font-size:24px;line-height:24px;color:#000;font-weight:normal;letter-spacing:0.3px;-webkit-text-stroke:0.3px #000;">Style Name</div>
<div style="position:absolute;left:0px;top:289px;width:2048px;height:43px;background:linear-gradient(#fbfbfb,#f1f1f1);"></div>
<div style="position:absolute;left:40px;top:289px;width:193px;height:43px;background:linear-gradient(#f3f3f3,#e4e4e4);"></div>
<div style="position:absolute;left:0px;top:289px;width:38px;height:43px;background:#fafafa;"></div>
<svg style="position:absolute;left:4px;top:298px" width="31" height="30" viewBox="0 0 31 30"><path d="M0 30 H30 V0 Z" fill="#dedede"/></svg>
<div style="position:absolute;left:0px;top:334px;width:38px;height:456px;background:linear-gradient(90deg,#fafafa,#f0f0f0);"></div>
<div style="position:absolute;left:0px;top:334px;width:38px;height:65px;background:linear-gradient(90deg,#f6f6f6,#e6e6e6);"></div>
<div style="position:absolute;left:38px;top:289px;width:2px;height:501px;background:#b9b9b9;"></div>
<div style="position:absolute;left:232px;top:334px;width:2px;height:456px;background:#d2d2d2;"></div>
<div style="position:absolute;left:324px;top:289px;width:2px;height:43px;background:#dcdcdc;"></div>
<div style="position:absolute;left:324px;top:334px;width:2px;height:456px;background:#d2d2d2;"></div>
<div style="position:absolute;left:486px;top:289px;width:2px;height:43px;background:#dcdcdc;"></div>
<div style="position:absolute;left:486px;top:334px;width:2px;height:456px;background:#d2d2d2;"></div>
<div style="position:absolute;left:564px;top:289px;width:2px;height:43px;background:#dcdcdc;"></div>
<div style="position:absolute;left:564px;top:334px;width:2px;height:456px;background:#d2d2d2;"></div>
<div style="position:absolute;left:620px;top:289px;width:2px;height:43px;background:#dcdcdc;"></div>
<div style="position:absolute;left:620px;top:334px;width:2px;height:456px;background:#d2d2d2;"></div>
<div style="position:absolute;left:708px;top:289px;width:2px;height:43px;background:#dcdcdc;"></div>
<div style="position:absolute;left:708px;top:334px;width:2px;height:456px;background:#d2d2d2;"></div>
<div style="position:absolute;left:868px;top:289px;width:2px;height:43px;background:#dcdcdc;"></div>
<div style="position:absolute;left:868px;top:334px;width:2px;height:456px;background:#d2d2d2;"></div>
<div style="position:absolute;left:926px;top:289px;width:2px;height:43px;background:#dcdcdc;"></div>
<div style="position:absolute;left:926px;top:334px;width:2px;height:456px;background:#d2d2d2;"></div>
<div style="position:absolute;left:1038px;top:289px;width:2px;height:43px;background:#dcdcdc;"></div>
<div style="position:absolute;left:1038px;top:334px;width:2px;height:456px;background:#d2d2d2;"></div>
<div style="position:absolute;left:1106px;top:289px;width:2px;height:43px;background:#dcdcdc;"></div>
<div style="position:absolute;left:1106px;top:334px;width:2px;height:456px;background:#d2d2d2;"></div>
<div style="position:absolute;left:1200px;top:289px;width:2px;height:43px;background:#dcdcdc;"></div>
<div style="position:absolute;left:1200px;top:334px;width:2px;height:456px;background:#d2d2d2;"></div>
<div style="position:absolute;left:1304px;top:289px;width:2px;height:43px;background:#dcdcdc;"></div>
<div style="position:absolute;left:1304px;top:334px;width:2px;height:456px;background:#d2d2d2;"></div>
<div style="position:absolute;left:1410px;top:289px;width:2px;height:43px;background:#dcdcdc;"></div>
<div style="position:absolute;left:1410px;top:334px;width:2px;height:456px;background:#d2d2d2;"></div>
<div style="position:absolute;left:1496px;top:289px;width:2px;height:43px;background:#dcdcdc;"></div>
<div style="position:absolute;left:1496px;top:334px;width:2px;height:456px;background:#d2d2d2;"></div>
<div style="position:absolute;left:1582px;top:289px;width:2px;height:43px;background:#dcdcdc;"></div>
<div style="position:absolute;left:1582px;top:334px;width:2px;height:456px;background:#d2d2d2;"></div>
<div style="position:absolute;left:1658px;top:289px;width:2px;height:43px;background:#dcdcdc;"></div>
<div style="position:absolute;left:1658px;top:334px;width:2px;height:456px;background:#d2d2d2;"></div>
<div style="position:absolute;left:1746px;top:289px;width:2px;height:43px;background:#dcdcdc;"></div>
<div style="position:absolute;left:1746px;top:334px;width:2px;height:456px;background:#d2d2d2;"></div>
<div style="position:absolute;left:1958px;top:289px;width:2px;height:43px;background:#dcdcdc;"></div>
<div style="position:absolute;left:1958px;top:334px;width:2px;height:456px;background:#d2d2d2;"></div>
<div style="position:absolute;left:2044px;top:289px;width:2px;height:43px;background:#dcdcdc;"></div>
<div style="position:absolute;left:2044px;top:334px;width:2px;height:456px;background:#d2d2d2;"></div>
<div style="position:absolute;left:0px;top:284px;width:2048px;height:1px;background:#a4a4a4;"></div>
<div style="position:absolute;left:0px;top:285px;width:2048px;height:3px;background:linear-gradient(#e4e4e4,#f0f0f0 50%,#d8d8d8);"></div>
<div style="position:absolute;left:0px;top:288px;width:2048px;height:2px;background:linear-gradient(#a6a6a6,#b4b4b4);"></div>
<div style="position:absolute;left:0px;top:332px;width:2048px;height:2px;background:#bdbdbd;"></div>
<div style="position:absolute;left:0px;top:398px;width:38px;height:2px;background:#dedede;"></div>
<div style="position:absolute;left:40px;top:398px;width:2008px;height:2px;background:#d2d2d2;"></div>
<div style="position:absolute;left:0px;top:426px;width:38px;height:2px;background:#dedede;"></div>
<div style="position:absolute;left:40px;top:426px;width:2008px;height:2px;background:#d2d2d2;"></div>
<div style="position:absolute;left:0px;top:454px;width:38px;height:2px;background:#dedede;"></div>
<div style="position:absolute;left:40px;top:454px;width:2008px;height:2px;background:#d2d2d2;"></div>
<div style="position:absolute;left:0px;top:482px;width:38px;height:2px;background:#dedede;"></div>
<div style="position:absolute;left:40px;top:482px;width:2008px;height:2px;background:#d2d2d2;"></div>
<div style="position:absolute;left:0px;top:510px;width:38px;height:2px;background:#dedede;"></div>
<div style="position:absolute;left:40px;top:510px;width:2008px;height:2px;background:#d2d2d2;"></div>
<div style="position:absolute;left:0px;top:538px;width:38px;height:2px;background:#dedede;"></div>
<div style="position:absolute;left:40px;top:538px;width:2008px;height:2px;background:#d2d2d2;"></div>
<div style="position:absolute;left:0px;top:566px;width:38px;height:2px;background:#dedede;"></div>
<div style="position:absolute;left:40px;top:566px;width:2008px;height:2px;background:#d2d2d2;"></div>
<div style="position:absolute;left:0px;top:594px;width:38px;height:2px;background:#dedede;"></div>
<div style="position:absolute;left:40px;top:594px;width:2008px;height:2px;background:#d2d2d2;"></div>
<div style="position:absolute;left:0px;top:622px;width:38px;height:2px;background:#dedede;"></div>
<div style="position:absolute;left:40px;top:622px;width:2008px;height:2px;background:#d2d2d2;"></div>
<div style="position:absolute;left:0px;top:650px;width:38px;height:2px;background:#dedede;"></div>
<div style="position:absolute;left:40px;top:650px;width:2008px;height:2px;background:#d2d2d2;"></div>
<div style="position:absolute;left:0px;top:678px;width:38px;height:2px;background:#dedede;"></div>
<div style="position:absolute;left:40px;top:678px;width:2008px;height:2px;background:#d2d2d2;"></div>
<div style="position:absolute;left:0px;top:706px;width:38px;height:2px;background:#dedede;"></div>
<div style="position:absolute;left:40px;top:706px;width:2008px;height:2px;background:#d2d2d2;"></div>
<div style="position:absolute;left:0px;top:734px;width:38px;height:2px;background:#dedede;"></div>
<div style="position:absolute;left:40px;top:734px;width:2008px;height:2px;background:#d2d2d2;"></div>
<div style="position:absolute;left:0px;top:762px;width:38px;height:2px;background:#dedede;"></div>
<div style="position:absolute;left:40px;top:762px;width:2008px;height:2px;background:#d2d2d2;"></div>
<div style="position:absolute;left:0px;top:790px;width:38px;height:2px;background:#dedede;"></div>
<div style="position:absolute;left:40px;top:790px;width:2008px;height:2px;background:#d2d2d2;"></div>
<div class="t" style="left:116.25px;width:40px;text-align:center;top:301.38px;font-size:22px;line-height:22px;color:#23754a;font-weight:bold;">A</div>
<div class="t" style="left:259.5px;width:40px;text-align:center;top:301.38px;font-size:22px;line-height:22px;color:#555;font-weight:normal;">B</div>
<div class="t" style="left:386.5px;width:40px;text-align:center;top:301.38px;font-size:22px;line-height:22px;color:#555;font-weight:normal;">C</div>
<div class="t" style="left:506.5px;width:40px;text-align:center;top:301.38px;font-size:22px;line-height:22px;color:#555;font-weight:normal;">D</div>
<div class="t" style="left:573.5px;width:40px;text-align:center;top:301.38px;font-size:22px;line-height:22px;color:#555;font-weight:normal;">E</div>
<div class="t" style="left:645.5px;width:40px;text-align:center;top:301.38px;font-size:22px;line-height:22px;color:#555;font-weight:normal;">F</div>
<div class="t" style="left:769.5px;width:40px;text-align:center;top:301.38px;font-size:22px;line-height:22px;color:#555;font-weight:normal;">G</div>
<div class="t" style="left:878.5px;width:40px;text-align:center;top:301.38px;font-size:22px;line-height:22px;color:#555;font-weight:normal;">H</div>
<div class="t" style="left:963.5px;width:40px;text-align:center;top:301.38px;font-size:22px;line-height:22px;color:#555;font-weight:normal;">I</div>
<div class="t" style="left:1053.5px;width:40px;text-align:center;top:301.38px;font-size:22px;line-height:22px;color:#555;font-weight:normal;">J</div>
<div class="t" style="left:1134.5px;width:40px;text-align:center;top:301.38px;font-size:22px;line-height:22px;color:#555;font-weight:normal;">K</div>
<div class="t" style="left:1233.5px;width:40px;text-align:center;top:301.38px;font-size:22px;line-height:22px;color:#555;font-weight:normal;">L</div>
<div class="t" style="left:1338.5px;width:40px;text-align:center;top:301.38px;font-size:22px;line-height:22px;color:#555;font-weight:normal;">M</div>
<div class="t" style="left:1434.5px;width:40px;text-align:center;top:301.38px;font-size:22px;line-height:22px;color:#555;font-weight:normal;">N</div>
<div class="t" style="left:1520.5px;width:40px;text-align:center;top:301.38px;font-size:22px;line-height:22px;color:#555;font-weight:normal;">O</div>
<div class="t" style="left:1601.5px;width:40px;text-align:center;top:301.38px;font-size:22px;line-height:22px;color:#555;font-weight:normal;">P</div>
<div class="t" style="left:1683.5px;width:40px;text-align:center;top:301.38px;font-size:22px;line-height:22px;color:#555;font-weight:normal;">Q</div>
<div class="t" style="left:1833.5px;width:40px;text-align:center;top:301.38px;font-size:22px;line-height:22px;color:#555;font-weight:normal;">R</div>
<div class="t" style="left:1982.5px;width:40px;text-align:center;top:301.38px;font-size:22px;line-height:22px;color:#555;font-weight:normal;">S</div>
<div class="t" style="left:-1.5px;width:36px;text-align:center;top:375.38px;font-size:22px;line-height:22px;color:#23754a;font-weight:bold;">1</div>
<div class="t" style="left:-2.1999999999999993px;width:36px;text-align:center;top:403.58px;font-size:22px;line-height:22px;color:#555;font-weight:normal;">2</div>
<div class="t" style="left:-2.1999999999999993px;width:36px;text-align:center;top:431.58px;font-size:22px;line-height:22px;color:#555;font-weight:normal;">3</div>
<div class="t" style="left:-2.1999999999999993px;width:36px;text-align:center;top:459.58px;font-size:22px;line-height:22px;color:#555;font-weight:normal;">4</div>
<div class="t" style="left:-2.1999999999999993px;width:36px;text-align:center;top:487.58px;font-size:22px;line-height:22px;color:#555;font-weight:normal;">5</div>
<div class="t" style="left:-2.1999999999999993px;width:36px;text-align:center;top:515.58px;font-size:22px;line-height:22px;color:#555;font-weight:normal;">6</div>
<div class="t" style="left:-2.1999999999999993px;width:36px;text-align:center;top:543.58px;font-size:22px;line-height:22px;color:#555;font-weight:normal;">7</div>
<div class="t" style="left:-2.1999999999999993px;width:36px;text-align:center;top:571.58px;font-size:22px;line-height:22px;color:#555;font-weight:normal;">8</div>
<div class="t" style="left:-2.1999999999999993px;width:36px;text-align:center;top:599.58px;font-size:22px;line-height:22px;color:#555;font-weight:normal;">9</div>
<div class="t" style="left:-2.1999999999999993px;width:36px;text-align:center;top:627.58px;font-size:22px;line-height:22px;color:#555;font-weight:normal;">10</div>
<div class="t" style="left:-2.1999999999999993px;width:36px;text-align:center;top:655.58px;font-size:22px;line-height:22px;color:#555;font-weight:normal;">11</div>
<div class="t" style="left:-2.1999999999999993px;width:36px;text-align:center;top:683.58px;font-size:22px;line-height:22px;color:#555;font-weight:normal;">12</div>
<div class="t" style="left:-2.1999999999999993px;width:36px;text-align:center;top:711.58px;font-size:22px;line-height:22px;color:#555;font-weight:normal;">13</div>
<div class="t" style="left:-2.1999999999999993px;width:36px;text-align:center;top:739.58px;font-size:22px;line-height:22px;color:#555;font-weight:normal;">14</div>
<div class="t" style="left:-2.1999999999999993px;width:36px;text-align:center;top:767.58px;font-size:22px;line-height:22px;color:#555;font-weight:normal;">15</div>
<div class="t" style="left:44px;top:355.58px;font-size:22px;line-height:22px;color:#000;font-weight:normal;">Style Name</div>
<div class="t" style="left:238.5px;top:341.38px;font-size:22px;line-height:22px;color:#000;font-weight:normal;">Style</div>
<div class="t" style="left:238.5px;top:369.18px;font-size:22px;line-height:22px;color:#000;font-weight:normal;">Number</div>
<div class="t" style="left:330.5px;top:355.58px;font-size:22px;line-height:22px;color:#000;font-weight:normal;">Color Name</div>
<div class="t" style="left:492.5px;top:341.38px;font-size:22px;line-height:22px;color:#000;font-weight:normal;">Color</div>
<div class="t" style="left:492.5px;top:369.18px;font-size:22px;line-height:22px;color:#000;font-weight:normal;">Code</div>
<div class="t" style="left:570.5px;top:355.58px;font-size:22px;line-height:22px;color:#000;font-weight:normal;">Size</div>
<div class="t" style="left:626.5px;top:355.58px;font-size:22px;line-height:22px;color:#000;font-weight:normal;">Alt Size</div>
<div class="t" style="left:714.5px;top:355.58px;font-size:22px;line-height:22px;color:#000;font-weight:normal;">UPC</div>
<div class="t" style="left:874.5px;top:355.58px;font-size:22px;line-height:22px;color:#000;font-weight:normal;">SKU</div>
<div class="t" style="left:932.5px;top:341.38px;font-size:22px;line-height:22px;color:#000;font-weight:normal;">Wholesale</div>
<div class="t" style="left:932.5px;top:369.18px;font-size:22px;line-height:22px;color:#000;font-weight:normal;">Price</div>
<div class="t" style="left:1044.5px;top:341.38px;font-size:22px;line-height:22px;color:#000;font-weight:normal;">Retail</div>
<div class="t" style="left:1044.5px;top:369.18px;font-size:22px;line-height:22px;color:#000;font-weight:normal;">Price</div>
<div class="t" style="left:1112.5px;top:355.58px;font-size:22px;line-height:22px;color:#000;font-weight:normal;">Quantity</div>
<div class="t" style="left:1206.5px;top:341.38px;font-size:22px;line-height:22px;color:#000;font-weight:normal;">Quantity</div>
<div class="t" style="left:1206.5px;top:369.18px;font-size:22px;line-height:22px;color:#000;font-weight:normal;">Available</div>
<div class="t" style="left:1310.5px;top:341.38px;font-size:22px;line-height:22px;color:#000;font-weight:normal;">Start Ship</div>
<div class="t" style="left:1310.5px;top:369.18px;font-size:22px;line-height:22px;color:#000;font-weight:normal;">Date</div>
<div class="t" style="left:1416.5px;top:341.38px;font-size:22px;line-height:22px;color:#000;font-weight:normal;">Cancel</div>
<div class="t" style="left:1416.5px;top:369.18px;font-size:22px;line-height:22px;color:#000;font-weight:normal;">Date</div>
<div class="t" style="left:1502.5px;top:355.58px;font-size:22px;line-height:22px;color:#000;font-weight:normal;">Gender</div>
<div class="t" style="left:1588.5px;top:355.58px;font-size:22px;line-height:22px;color:#000;font-weight:normal;">Type</div>
<div class="t" style="left:1664.5px;top:355.58px;font-size:22px;line-height:22px;color:#000;font-weight:normal;">Catalog</div>
<div class="t" style="left:1752.5px;top:355.58px;font-size:22px;line-height:22px;color:#000;font-weight:normal;">Collection</div>
<div class="t" style="left:1964.5px;top:355.58px;font-size:22px;line-height:22px;color:#000;font-weight:normal;">Color</div>
<div class="t" style="left:44px;top:403.58px;font-size:22px;line-height:22px;color:#000;font-weight:normal;">W&#x27;s Spyfire Jacket</div>
<div class="t" style="left:239px;width:80px;text-align:right;top:403.58px;font-size:22px;line-height:22px;color:#000;font-weight:normal;">2101</div>
<div class="t" style="left:330px;top:403.58px;font-size:22px;line-height:22px;color:#000;font-weight:normal;">CONCORD</div>
<div class="t" style="left:492px;top:403.58px;font-size:22px;line-height:22px;color:#000;font-weight:normal;">CON</div>
<div class="t" style="left:570px;top:403.58px;font-size:22px;line-height:22px;color:#000;font-weight:normal;">XS</div>
<div class="t" style="left:626px;top:403.58px;font-size:22px;line-height:22px;color:#000;font-weight:normal;">_</div>
<div class="t" style="left:718px;top:403.58px;font-size:22px;line-height:22px;color:#000;font-weight:normal;">631411826219</div>
<div class="t" style="left:952.5px;width:80px;text-align:right;top:403.58px;font-size:22px;line-height:22px;color:#000;font-weight:normal;">110</div>
<div class="t" style="left:1020.5px;width:80px;text-align:right;top:403.58px;font-size:22px;line-height:22px;color:#000;font-weight:normal;">220</div>
<div class="t" style="left:1114.5px;width:80px;text-align:right;top:403.58px;font-size:22px;line-height:22px;color:#000;font-weight:normal;">2</div>
<div class="t" style="left:1218.5px;width:80px;text-align:right;top:403.58px;font-size:22px;line-height:22px;color:#000;font-weight:normal;">2</div>
<div class="t" style="left:1307px;width:100px;text-align:right;top:403.58px;font-size:22px;line-height:22px;color:#000;font-weight:normal;">8/16/17</div>
<div class="t" style="left:1502.5px;top:403.58px;font-size:22px;line-height:22px;color:#000;font-weight:normal;">W</div>
<div class="t" style="left:1588.5px;top:403.58px;font-size:22px;line-height:22px;color:#000;font-weight:normal;">Jacket</div>
<div class="t" style="left:1700.5px;width:40px;text-align:right;top:403.58px;font-size:22px;line-height:22px;color:#000;font-weight:normal;">1</div>
<div class="t" style="left:1752.5px;top:403.58px;font-size:22px;line-height:22px;color:#000;font-weight:normal;">Women&#x27;s Outerwear</div>
<div class="t" style="left:44px;top:431.58px;font-size:22px;line-height:22px;color:#000;font-weight:normal;">W&#x27;s Spyfire Jacket</div>
<div class="t" style="left:239px;width:80px;text-align:right;top:431.58px;font-size:22px;line-height:22px;color:#000;font-weight:normal;">2101</div>
<div class="t" style="left:330px;top:431.58px;font-size:22px;line-height:22px;color:#000;font-weight:normal;">CONCORD</div>
<div class="t" style="left:492px;top:431.58px;font-size:22px;line-height:22px;color:#000;font-weight:normal;">CON</div>
<div class="t" style="left:570px;top:431.58px;font-size:22px;line-height:22px;color:#000;font-weight:normal;">S</div>
<div class="t" style="left:626px;top:431.58px;font-size:22px;line-height:22px;color:#000;font-weight:normal;">_</div>
<div class="t" style="left:718px;top:431.58px;font-size:22px;line-height:22px;color:#000;font-weight:normal;">631411826226</div>
<div class="t" style="left:952.5px;width:80px;text-align:right;top:431.58px;font-size:22px;line-height:22px;color:#000;font-weight:normal;">110</div>
<div class="t" style="left:1020.5px;width:80px;text-align:right;top:431.58px;font-size:22px;line-height:22px;color:#000;font-weight:normal;">220</div>
<div class="t" style="left:1114.5px;width:80px;text-align:right;top:431.58px;font-size:22px;line-height:22px;color:#000;font-weight:normal;">2</div>
<div class="t" style="left:1218.5px;width:80px;text-align:right;top:431.58px;font-size:22px;line-height:22px;color:#000;font-weight:normal;">5</div>
<div class="t" style="left:1307px;width:100px;text-align:right;top:431.58px;font-size:22px;line-height:22px;color:#000;font-weight:normal;">8/16/17</div>
<div class="t" style="left:1502.5px;top:431.58px;font-size:22px;line-height:22px;color:#000;font-weight:normal;">W</div>
<div class="t" style="left:1588.5px;top:431.58px;font-size:22px;line-height:22px;color:#000;font-weight:normal;">Jacket</div>
<div class="t" style="left:1700.5px;width:40px;text-align:right;top:431.58px;font-size:22px;line-height:22px;color:#000;font-weight:normal;">1</div>
<div class="t" style="left:1752.5px;top:431.58px;font-size:22px;line-height:22px;color:#000;font-weight:normal;">Women&#x27;s Outerwear</div>
<div class="t" style="left:44px;top:459.58px;font-size:22px;line-height:22px;color:#000;font-weight:normal;">W&#x27;s Spyfire Jacket</div>
<div class="t" style="left:239px;width:80px;text-align:right;top:459.58px;font-size:22px;line-height:22px;color:#000;font-weight:normal;">2101</div>
<div class="t" style="left:330px;top:459.58px;font-size:22px;line-height:22px;color:#000;font-weight:normal;">CONCORD</div>
<div class="t" style="left:492px;top:459.58px;font-size:22px;line-height:22px;color:#000;font-weight:normal;">CON</div>
<div class="t" style="left:570px;top:459.58px;font-size:22px;line-height:22px;color:#000;font-weight:normal;">M</div>
<div class="t" style="left:626px;top:459.58px;font-size:22px;line-height:22px;color:#000;font-weight:normal;">_</div>
<div class="t" style="left:718px;top:459.58px;font-size:22px;line-height:22px;color:#000;font-weight:normal;">631411826233</div>
<div class="t" style="left:952.5px;width:80px;text-align:right;top:459.58px;font-size:22px;line-height:22px;color:#000;font-weight:normal;">110</div>
<div class="t" style="left:1020.5px;width:80px;text-align:right;top:459.58px;font-size:22px;line-height:22px;color:#000;font-weight:normal;">220</div>
<div class="t" style="left:1114.5px;width:80px;text-align:right;top:459.58px;font-size:22px;line-height:22px;color:#000;font-weight:normal;">2</div>
<div class="t" style="left:1218.5px;width:80px;text-align:right;top:459.58px;font-size:22px;line-height:22px;color:#000;font-weight:normal;">6</div>
<div class="t" style="left:1307px;width:100px;text-align:right;top:459.58px;font-size:22px;line-height:22px;color:#000;font-weight:normal;">8/16/17</div>
<div class="t" style="left:1502.5px;top:459.58px;font-size:22px;line-height:22px;color:#000;font-weight:normal;">W</div>
<div class="t" style="left:1588.5px;top:459.58px;font-size:22px;line-height:22px;color:#000;font-weight:normal;">Jacket</div>
<div class="t" style="left:1700.5px;width:40px;text-align:right;top:459.58px;font-size:22px;line-height:22px;color:#000;font-weight:normal;">1</div>
<div class="t" style="left:1752.5px;top:459.58px;font-size:22px;line-height:22px;color:#000;font-weight:normal;">Women&#x27;s Outerwear</div>
<div class="t" style="left:44px;top:487.58px;font-size:22px;line-height:22px;color:#000;font-weight:normal;">W&#x27;s Spyfire Jacket</div>
<div class="t" style="left:239px;width:80px;text-align:right;top:487.58px;font-size:22px;line-height:22px;color:#000;font-weight:normal;">2101</div>
<div class="t" style="left:330px;top:487.58px;font-size:22px;line-height:22px;color:#000;font-weight:normal;">CONCORD</div>
<div class="t" style="left:492px;top:487.58px;font-size:22px;line-height:22px;color:#000;font-weight:normal;">CON</div>
<div class="t" style="left:570px;top:487.58px;font-size:22px;line-height:22px;color:#000;font-weight:normal;">L</div>
<div class="t" style="left:626px;top:487.58px;font-size:22px;line-height:22px;color:#000;font-weight:normal;">_</div>
<div class="t" style="left:718px;top:487.58px;font-size:22px;line-height:22px;color:#000;font-weight:normal;">631411826240</div>
<div class="t" style="left:952.5px;width:80px;text-align:right;top:487.58px;font-size:22px;line-height:22px;color:#000;font-weight:normal;">110</div>
<div class="t" style="left:1020.5px;width:80px;text-align:right;top:487.58px;font-size:22px;line-height:22px;color:#000;font-weight:normal;">220</div>
<div class="t" style="left:1114.5px;width:80px;text-align:right;top:487.58px;font-size:22px;line-height:22px;color:#000;font-weight:normal;">2</div>
<div class="t" style="left:1218.5px;width:80px;text-align:right;top:487.58px;font-size:22px;line-height:22px;color:#000;font-weight:normal;">4</div>
<div class="t" style="left:1307px;width:100px;text-align:right;top:487.58px;font-size:22px;line-height:22px;color:#000;font-weight:normal;">8/16/17</div>
<div class="t" style="left:1502.5px;top:487.58px;font-size:22px;line-height:22px;color:#000;font-weight:normal;">W</div>
<div class="t" style="left:1588.5px;top:487.58px;font-size:22px;line-height:22px;color:#000;font-weight:normal;">Jacket</div>
<div class="t" style="left:1700.5px;width:40px;text-align:right;top:487.58px;font-size:22px;line-height:22px;color:#000;font-weight:normal;">1</div>
<div class="t" style="left:1752.5px;top:487.58px;font-size:22px;line-height:22px;color:#000;font-weight:normal;">Women&#x27;s Outerwear</div>
<div class="t" style="left:44px;top:515.58px;font-size:22px;line-height:22px;color:#000;font-weight:normal;">W&#x27;s Spyfire Jacket</div>
<div class="t" style="left:239px;width:80px;text-align:right;top:515.58px;font-size:22px;line-height:22px;color:#000;font-weight:normal;">2101</div>
<div class="t" style="left:330px;top:515.58px;font-size:22px;line-height:22px;color:#000;font-weight:normal;">CONCORD</div>
<div class="t" style="left:492px;top:515.58px;font-size:22px;line-height:22px;color:#000;font-weight:normal;">CON</div>
<div class="t" style="left:570px;top:515.58px;font-size:22px;line-height:22px;color:#000;font-weight:normal;">XL</div>
<div class="t" style="left:626px;top:515.58px;font-size:22px;line-height:22px;color:#000;font-weight:normal;">_</div>
<div class="t" style="left:718px;top:515.58px;font-size:22px;line-height:22px;color:#000;font-weight:normal;">631411826257</div>
<div class="t" style="left:952.5px;width:80px;text-align:right;top:515.58px;font-size:22px;line-height:22px;color:#000;font-weight:normal;">110</div>
<div class="t" style="left:1020.5px;width:80px;text-align:right;top:515.58px;font-size:22px;line-height:22px;color:#000;font-weight:normal;">220</div>
<div class="t" style="left:1114.5px;width:80px;text-align:right;top:515.58px;font-size:22px;line-height:22px;color:#000;font-weight:normal;">1</div>
<div class="t" style="left:1218.5px;width:80px;text-align:right;top:515.58px;font-size:22px;line-height:22px;color:#000;font-weight:normal;">1</div>
<div class="t" style="left:1307px;width:100px;text-align:right;top:515.58px;font-size:22px;line-height:22px;color:#000;font-weight:normal;">8/16/17</div>
<div class="t" style="left:1502.5px;top:515.58px;font-size:22px;line-height:22px;color:#000;font-weight:normal;">W</div>
<div class="t" style="left:1588.5px;top:515.58px;font-size:22px;line-height:22px;color:#000;font-weight:normal;">Jacket</div>
<div class="t" style="left:1700.5px;width:40px;text-align:right;top:515.58px;font-size:22px;line-height:22px;color:#000;font-weight:normal;">1</div>
<div class="t" style="left:1752.5px;top:515.58px;font-size:22px;line-height:22px;color:#000;font-weight:normal;">Women&#x27;s Outerwear</div>
<div class="t" style="left:44px;top:543.58px;font-size:22px;line-height:22px;color:#000;font-weight:normal;">W&#x27;s Spyfire Jacket</div>
<div class="t" style="left:239px;width:80px;text-align:right;top:543.58px;font-size:22px;line-height:22px;color:#000;font-weight:normal;">2101</div>
<div class="t" style="left:330px;top:543.58px;font-size:22px;line-height:22px;color:#000;font-weight:normal;">CARBON</div>
<div class="t" style="left:492px;top:543.58px;font-size:22px;line-height:22px;color:#000;font-weight:normal;">CA</div>
<div class="t" style="left:570px;top:543.58px;font-size:22px;line-height:22px;color:#000;font-weight:normal;">XS</div>
<div class="t" style="left:626px;top:543.58px;font-size:22px;line-height:22px;color:#000;font-weight:normal;">_</div>
<div class="t" style="left:718px;top:543.58px;font-size:22px;line-height:22px;color:#000;font-weight:normal;">631411826165</div>
<div class="t" style="left:952.5px;width:80px;text-align:right;top:543.58px;font-size:22px;line-height:22px;color:#000;font-weight:normal;">110</div>
<div class="t" style="left:1020.5px;width:80px;text-align:right;top:543.58px;font-size:22px;line-height:22px;color:#000;font-weight:normal;">220</div>
<div class="t" style="left:1114.5px;width:80px;text-align:right;top:543.58px;font-size:22px;line-height:22px;color:#000;font-weight:normal;">0</div>
<div class="t" style="left:1218.5px;width:80px;text-align:right;top:543.58px;font-size:22px;line-height:22px;color:#000;font-weight:normal;">0</div>
<div class="t" style="left:1307px;width:100px;text-align:right;top:543.58px;font-size:22px;line-height:22px;color:#000;font-weight:normal;">8/16/17</div>
<div class="t" style="left:1502.5px;top:543.58px;font-size:22px;line-height:22px;color:#000;font-weight:normal;">W</div>
<div class="t" style="left:1588.5px;top:543.58px;font-size:22px;line-height:22px;color:#000;font-weight:normal;">Jacket</div>
<div class="t" style="left:1700.5px;width:40px;text-align:right;top:543.58px;font-size:22px;line-height:22px;color:#000;font-weight:normal;">1</div>
<div class="t" style="left:1752.5px;top:543.58px;font-size:22px;line-height:22px;color:#000;font-weight:normal;">Women&#x27;s Outerwear</div>
<div class="t" style="left:44px;top:571.58px;font-size:22px;line-height:22px;color:#000;font-weight:normal;">W&#x27;s Spyfire Jacket</div>
<div class="t" style="left:239px;width:80px;text-align:right;top:571.58px;font-size:22px;line-height:22px;color:#000;font-weight:normal;">2101</div>
<div class="t" style="left:330px;top:571.58px;font-size:22px;line-height:22px;color:#000;font-weight:normal;">CARBON</div>
<div class="t" style="left:492px;top:571.58px;font-size:22px;line-height:22px;color:#000;font-weight:normal;">CA</div>
<div class="t" style="left:570px;top:571.58px;font-size:22px;line-height:22px;color:#000;font-weight:normal;">S</div>
<div class="t" style="left:626px;top:571.58px;font-size:22px;line-height:22px;color:#000;font-weight:normal;">_</div>
<div class="t" style="left:718px;top:571.58px;font-size:22px;line-height:22px;color:#000;font-weight:normal;">631411826172</div>
<div class="t" style="left:952.5px;width:80px;text-align:right;top:571.58px;font-size:22px;line-height:22px;color:#000;font-weight:normal;">110</div>
<div class="t" style="left:1020.5px;width:80px;text-align:right;top:571.58px;font-size:22px;line-height:22px;color:#000;font-weight:normal;">220</div>
<div class="t" style="left:1114.5px;width:80px;text-align:right;top:571.58px;font-size:22px;line-height:22px;color:#000;font-weight:normal;">0</div>
<div class="t" style="left:1218.5px;width:80px;text-align:right;top:571.58px;font-size:22px;line-height:22px;color:#000;font-weight:normal;">0</div>
<div class="t" style="left:1307px;width:100px;text-align:right;top:571.58px;font-size:22px;line-height:22px;color:#000;font-weight:normal;">8/16/17</div>
<div class="t" style="left:1502.5px;top:571.58px;font-size:22px;line-height:22px;color:#000;font-weight:normal;">W</div>
<div class="t" style="left:1588.5px;top:571.58px;font-size:22px;line-height:22px;color:#000;font-weight:normal;">Jacket</div>
<div class="t" style="left:1700.5px;width:40px;text-align:right;top:571.58px;font-size:22px;line-height:22px;color:#000;font-weight:normal;">1</div>
<div class="t" style="left:1752.5px;top:571.58px;font-size:22px;line-height:22px;color:#000;font-weight:normal;">Women&#x27;s Outerwear</div>
<div class="t" style="left:44px;top:599.58px;font-size:22px;line-height:22px;color:#000;font-weight:normal;">W&#x27;s Spyfire Jacket</div>
<div class="t" style="left:239px;width:80px;text-align:right;top:599.58px;font-size:22px;line-height:22px;color:#000;font-weight:normal;">2101</div>
<div class="t" style="left:330px;top:599.58px;font-size:22px;line-height:22px;color:#000;font-weight:normal;">CARBON</div>
<div class="t" style="left:492px;top:599.58px;font-size:22px;line-height:22px;color:#000;font-weight:normal;">CA</div>
<div class="t" style="left:570px;top:599.58px;font-size:22px;line-height:22px;color:#000;font-weight:normal;">M</div>
<div class="t" style="left:626px;top:599.58px;font-size:22px;line-height:22px;color:#000;font-weight:normal;">_</div>
<div class="t" style="left:718px;top:599.58px;font-size:22px;line-height:22px;color:#000;font-weight:normal;">631411826189</div>
<div class="t" style="left:952.5px;width:80px;text-align:right;top:599.58px;font-size:22px;line-height:22px;color:#000;font-weight:normal;">110</div>
<div class="t" style="left:1020.5px;width:80px;text-align:right;top:599.58px;font-size:22px;line-height:22px;color:#000;font-weight:normal;">220</div>
<div class="t" style="left:1114.5px;width:80px;text-align:right;top:599.58px;font-size:22px;line-height:22px;color:#000;font-weight:normal;">0</div>
<div class="t" style="left:1218.5px;width:80px;text-align:right;top:599.58px;font-size:22px;line-height:22px;color:#000;font-weight:normal;">0</div>
<div class="t" style="left:1307px;width:100px;text-align:right;top:599.58px;font-size:22px;line-height:22px;color:#000;font-weight:normal;">8/16/17</div>
<div class="t" style="left:1502.5px;top:599.58px;font-size:22px;line-height:22px;color:#000;font-weight:normal;">W</div>
<div class="t" style="left:1588.5px;top:599.58px;font-size:22px;line-height:22px;color:#000;font-weight:normal;">Jacket</div>
<div class="t" style="left:1700.5px;width:40px;text-align:right;top:599.58px;font-size:22px;line-height:22px;color:#000;font-weight:normal;">1</div>
<div class="t" style="left:1752.5px;top:599.58px;font-size:22px;line-height:22px;color:#000;font-weight:normal;">Women&#x27;s Outerwear</div>
<div class="t" style="left:44px;top:627.58px;font-size:22px;line-height:22px;color:#000;font-weight:normal;">W&#x27;s Spyfire Jacket</div>
<div class="t" style="left:239px;width:80px;text-align:right;top:627.58px;font-size:22px;line-height:22px;color:#000;font-weight:normal;">2101</div>
<div class="t" style="left:330px;top:627.58px;font-size:22px;line-height:22px;color:#000;font-weight:normal;">CARBON</div>
<div class="t" style="left:492px;top:627.58px;font-size:22px;line-height:22px;color:#000;font-weight:normal;">CA</div>
<div class="t" style="left:570px;top:627.58px;font-size:22px;line-height:22px;color:#000;font-weight:normal;">L</div>
<div class="t" style="left:626px;top:627.58px;font-size:22px;line-height:22px;color:#000;font-weight:normal;">_</div>
<div class="t" style="left:718px;top:627.58px;font-size:22px;line-height:22px;color:#000;font-weight:normal;">631411826196</div>
<div class="t" style="left:952.5px;width:80px;text-align:right;top:627.58px;font-size:22px;line-height:22px;color:#000;font-weight:normal;">110</div>
<div class="t" style="left:1020.5px;width:80px;text-align:right;top:627.58px;font-size:22px;line-height:22px;color:#000;font-weight:normal;">220</div>
<div class="t" style="left:1114.5px;width:80px;text-align:right;top:627.58px;font-size:22px;line-height:22px;color:#000;font-weight:normal;">0</div>
<div class="t" style="left:1218.5px;width:80px;text-align:right;top:627.58px;font-size:22px;line-height:22px;color:#000;font-weight:normal;">0</div>
<div class="t" style="left:1307px;width:100px;text-align:right;top:627.58px;font-size:22px;line-height:22px;color:#000;font-weight:normal;">8/16/17</div>
<div class="t" style="left:1502.5px;top:627.58px;font-size:22px;line-height:22px;color:#000;font-weight:normal;">W</div>
<div class="t" style="left:1588.5px;top:627.58px;font-size:22px;line-height:22px;color:#000;font-weight:normal;">Jacket</div>
<div class="t" style="left:1700.5px;width:40px;text-align:right;top:627.58px;font-size:22px;line-height:22px;color:#000;font-weight:normal;">1</div>
<div class="t" style="left:1752.5px;top:627.58px;font-size:22px;line-height:22px;color:#000;font-weight:normal;">Women&#x27;s Outerwear</div>
<div class="t" style="left:44px;top:655.58px;font-size:22px;line-height:22px;color:#000;font-weight:normal;">W&#x27;s Spyfire Jacket</div>
<div class="t" style="left:239px;width:80px;text-align:right;top:655.58px;font-size:22px;line-height:22px;color:#000;font-weight:normal;">2101</div>
<div class="t" style="left:330px;top:655.58px;font-size:22px;line-height:22px;color:#000;font-weight:normal;">CARBON</div>
<div class="t" style="left:492px;top:655.58px;font-size:22px;line-height:22px;color:#000;font-weight:normal;">CA</div>
<div class="t" style="left:570px;top:655.58px;font-size:22px;line-height:22px;color:#000;font-weight:normal;">XL</div>
<div class="t" style="left:626px;top:655.58px;font-size:22px;line-height:22px;color:#000;font-weight:normal;">_</div>
<div class="t" style="left:718px;top:655.58px;font-size:22px;line-height:22px;color:#000;font-weight:normal;">631411826202</div>
<div class="t" style="left:952.5px;width:80px;text-align:right;top:655.58px;font-size:22px;line-height:22px;color:#000;font-weight:normal;">110</div>
<div class="t" style="left:1020.5px;width:80px;text-align:right;top:655.58px;font-size:22px;line-height:22px;color:#000;font-weight:normal;">220</div>
<div class="t" style="left:1114.5px;width:80px;text-align:right;top:655.58px;font-size:22px;line-height:22px;color:#000;font-weight:normal;">0</div>
<div class="t" style="left:1218.5px;width:80px;text-align:right;top:655.58px;font-size:22px;line-height:22px;color:#000;font-weight:normal;">0</div>
<div class="t" style="left:1307px;width:100px;text-align:right;top:655.58px;font-size:22px;line-height:22px;color:#000;font-weight:normal;">8/16/17</div>
<div class="t" style="left:1502.5px;top:655.58px;font-size:22px;line-height:22px;color:#000;font-weight:normal;">W</div>
<div class="t" style="left:1588.5px;top:655.58px;font-size:22px;line-height:22px;color:#000;font-weight:normal;">Jacket</div>
<div class="t" style="left:1700.5px;width:40px;text-align:right;top:655.58px;font-size:22px;line-height:22px;color:#000;font-weight:normal;">1</div>
<div class="t" style="left:1752.5px;top:655.58px;font-size:22px;line-height:22px;color:#000;font-weight:normal;">Women&#x27;s Outerwear</div>
<div class="t" style="left:44px;top:683.58px;font-size:22px;line-height:22px;color:#000;font-weight:normal;">W&#x27;s Spyfire Jacket</div>
<div class="t" style="left:239px;width:80px;text-align:right;top:683.58px;font-size:22px;line-height:22px;color:#000;font-weight:normal;">2101</div>
<div class="t" style="left:330px;top:683.58px;font-size:22px;line-height:22px;color:#000;font-weight:normal;">PEACOCK</div>
<div class="t" style="left:492px;top:683.58px;font-size:22px;line-height:22px;color:#000;font-weight:normal;">PE</div>
<div class="t" style="left:570px;top:683.58px;font-size:22px;line-height:22px;color:#000;font-weight:normal;">XS</div>
<div class="t" style="left:626px;top:683.58px;font-size:22px;line-height:22px;color:#000;font-weight:normal;">_</div>
<div class="t" style="left:718px;top:683.58px;font-size:22px;line-height:22px;color:#000;font-weight:normal;">631411864013</div>
<div class="t" style="left:952.5px;width:80px;text-align:right;top:683.58px;font-size:22px;line-height:22px;color:#000;font-weight:normal;">110</div>
<div class="t" style="left:1020.5px;width:80px;text-align:right;top:683.58px;font-size:22px;line-height:22px;color:#000;font-weight:normal;">220</div>
<div class="t" style="left:1114.5px;width:80px;text-align:right;top:683.58px;font-size:22px;line-height:22px;color:#000;font-weight:normal;">1</div>
<div class="t" style="left:1218.5px;width:80px;text-align:right;top:683.58px;font-size:22px;line-height:22px;color:#000;font-weight:normal;">1</div>
<div class="t" style="left:1307px;width:100px;text-align:right;top:683.58px;font-size:22px;line-height:22px;color:#000;font-weight:normal;">8/16/17</div>
<div class="t" style="left:1502.5px;top:683.58px;font-size:22px;line-height:22px;color:#000;font-weight:normal;">W</div>
<div class="t" style="left:1588.5px;top:683.58px;font-size:22px;line-height:22px;color:#000;font-weight:normal;">Jacket</div>
<div class="t" style="left:1700.5px;width:40px;text-align:right;top:683.58px;font-size:22px;line-height:22px;color:#000;font-weight:normal;">1</div>
<div class="t" style="left:1752.5px;top:683.58px;font-size:22px;line-height:22px;color:#000;font-weight:normal;">Women&#x27;s Outerwear</div>
<div class="t" style="left:44px;top:711.58px;font-size:22px;line-height:22px;color:#000;font-weight:normal;">W&#x27;s Spyfire Jacket</div>
<div class="t" style="left:239px;width:80px;text-align:right;top:711.58px;font-size:22px;line-height:22px;color:#000;font-weight:normal;">2101</div>
<div class="t" style="left:330px;top:711.58px;font-size:22px;line-height:22px;color:#000;font-weight:normal;">PEACOCK</div>
<div class="t" style="left:492px;top:711.58px;font-size:22px;line-height:22px;color:#000;font-weight:normal;">PE</div>
<div class="t" style="left:570px;top:711.58px;font-size:22px;line-height:22px;color:#000;font-weight:normal;">S</div>
<div class="t" style="left:626px;top:711.58px;font-size:22px;line-height:22px;color:#000;font-weight:normal;">_</div>
<div class="t" style="left:718px;top:711.58px;font-size:22px;line-height:22px;color:#000;font-weight:normal;">631411864020</div>
<div class="t" style="left:952.5px;width:80px;text-align:right;top:711.58px;font-size:22px;line-height:22px;color:#000;font-weight:normal;">110</div>
<div class="t" style="left:1020.5px;width:80px;text-align:right;top:711.58px;font-size:22px;line-height:22px;color:#000;font-weight:normal;">220</div>
<div class="t" style="left:1114.5px;width:80px;text-align:right;top:711.58px;font-size:22px;line-height:22px;color:#000;font-weight:normal;">4</div>
<div class="t" style="left:1218.5px;width:80px;text-align:right;top:711.58px;font-size:22px;line-height:22px;color:#000;font-weight:normal;">4</div>
<div class="t" style="left:1307px;width:100px;text-align:right;top:711.58px;font-size:22px;line-height:22px;color:#000;font-weight:normal;">8/16/17</div>
<div class="t" style="left:1502.5px;top:711.58px;font-size:22px;line-height:22px;color:#000;font-weight:normal;">W</div>
<div class="t" style="left:1588.5px;top:711.58px;font-size:22px;line-height:22px;color:#000;font-weight:normal;">Jacket</div>
<div class="t" style="left:1700.5px;width:40px;text-align:right;top:711.58px;font-size:22px;line-height:22px;color:#000;font-weight:normal;">1</div>
<div class="t" style="left:1752.5px;top:711.58px;font-size:22px;line-height:22px;color:#000;font-weight:normal;">Women&#x27;s Outerwear</div>
<div class="t" style="left:44px;top:739.58px;font-size:22px;line-height:22px;color:#000;font-weight:normal;">W&#x27;s Spyfire Jacket</div>
<div class="t" style="left:239px;width:80px;text-align:right;top:739.58px;font-size:22px;line-height:22px;color:#000;font-weight:normal;">2101</div>
<div class="t" style="left:330px;top:739.58px;font-size:22px;line-height:22px;color:#000;font-weight:normal;">PEACOCK</div>
<div class="t" style="left:492px;top:739.58px;font-size:22px;line-height:22px;color:#000;font-weight:normal;">PE</div>
<div class="t" style="left:570px;top:739.58px;font-size:22px;line-height:22px;color:#000;font-weight:normal;">M</div>
<div class="t" style="left:626px;top:739.58px;font-size:22px;line-height:22px;color:#000;font-weight:normal;">_</div>
<div class="t" style="left:718px;top:739.58px;font-size:22px;line-height:22px;color:#000;font-weight:normal;">631411864037</div>
<div class="t" style="left:952.5px;width:80px;text-align:right;top:739.58px;font-size:22px;line-height:22px;color:#000;font-weight:normal;">110</div>
<div class="t" style="left:1020.5px;width:80px;text-align:right;top:739.58px;font-size:22px;line-height:22px;color:#000;font-weight:normal;">220</div>
<div class="t" style="left:1114.5px;width:80px;text-align:right;top:739.58px;font-size:22px;line-height:22px;color:#000;font-weight:normal;">5</div>
<div class="t" style="left:1218.5px;width:80px;text-align:right;top:739.58px;font-size:22px;line-height:22px;color:#000;font-weight:normal;">5</div>
<div class="t" style="left:1307px;width:100px;text-align:right;top:739.58px;font-size:22px;line-height:22px;color:#000;font-weight:normal;">8/16/17</div>
<div class="t" style="left:1502.5px;top:739.58px;font-size:22px;line-height:22px;color:#000;font-weight:normal;">W</div>
<div class="t" style="left:1588.5px;top:739.58px;font-size:22px;line-height:22px;color:#000;font-weight:normal;">Jacket</div>
<div class="t" style="left:1700.5px;width:40px;text-align:right;top:739.58px;font-size:22px;line-height:22px;color:#000;font-weight:normal;">1</div>
<div class="t" style="left:1752.5px;top:739.58px;font-size:22px;line-height:22px;color:#000;font-weight:normal;">Women&#x27;s Outerwear</div>
<div class="t" style="left:44px;top:767.58px;font-size:22px;line-height:22px;color:#000;font-weight:normal;">W&#x27;s Spyfire Jacket</div>
<div class="t" style="left:239px;width:80px;text-align:right;top:767.58px;font-size:22px;line-height:22px;color:#000;font-weight:normal;">2101</div>
<div class="t" style="left:330px;top:767.58px;font-size:22px;line-height:22px;color:#000;font-weight:normal;">PEACOCK</div>
<div class="t" style="left:492px;top:767.58px;font-size:22px;line-height:22px;color:#000;font-weight:normal;">PE</div>
<div class="t" style="left:570px;top:767.58px;font-size:22px;line-height:22px;color:#000;font-weight:normal;">L</div>
<div class="t" style="left:626px;top:767.58px;font-size:22px;line-height:22px;color:#000;font-weight:normal;">_</div>
<div class="t" style="left:718px;top:767.58px;font-size:22px;line-height:22px;color:#000;font-weight:normal;">631411864044</div>
<div class="t" style="left:952.5px;width:80px;text-align:right;top:767.58px;font-size:22px;line-height:22px;color:#000;font-weight:normal;">110</div>
<div class="t" style="left:1020.5px;width:80px;text-align:right;top:767.58px;font-size:22px;line-height:22px;color:#000;font-weight:normal;">220</div>
<div class="t" style="left:1114.5px;width:80px;text-align:right;top:767.58px;font-size:22px;line-height:22px;color:#000;font-weight:normal;">3</div>
<div class="t" style="left:1218.5px;width:80px;text-align:right;top:767.58px;font-size:22px;line-height:22px;color:#000;font-weight:normal;">3</div>
<div class="t" style="left:1307px;width:100px;text-align:right;top:767.58px;font-size:22px;line-height:22px;color:#000;font-weight:normal;">8/16/17</div>
<div class="t" style="left:1502.5px;top:767.58px;font-size:22px;line-height:22px;color:#000;font-weight:normal;">W</div>
<div class="t" style="left:1588.5px;top:767.58px;font-size:22px;line-height:22px;color:#000;font-weight:normal;">Jacket</div>
<div class="t" style="left:1700.5px;width:40px;text-align:right;top:767.58px;font-size:22px;line-height:22px;color:#000;font-weight:normal;">1</div>
<div class="t" style="left:1752.5px;top:767.58px;font-size:22px;line-height:22px;color:#000;font-weight:normal;">Women&#x27;s Outerwear</div>
<div style="position:absolute;left:36px;top:330px;width:200px;height:72px;box-sizing:border-box;border:4px solid #217346;"></div>
<div style="position:absolute;left:226px;top:392px;width:14px;height:14px;background:#fff;"></div>
<div style="position:absolute;left:228px;top:394px;width:10px;height:10px;background:#217346;"></div>
</body></html>
